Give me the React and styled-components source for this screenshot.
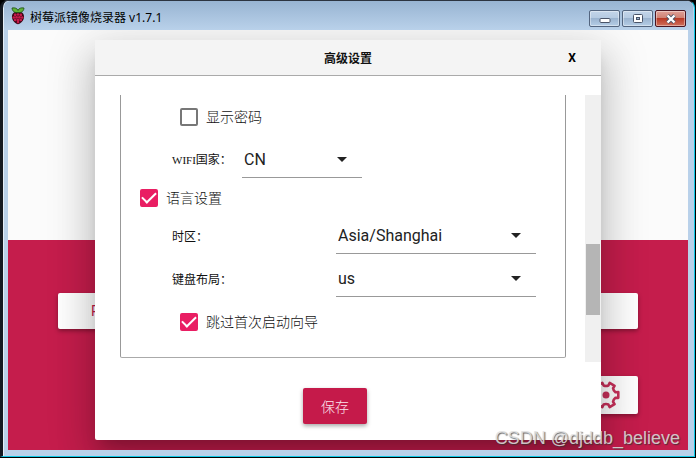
import React, { useState } from 'react';
import styled, { createGlobalStyle } from 'styled-components';

const GlobalStyle = createGlobalStyle`
  * {
    box-sizing: border-box;
  }

  body {
    margin: 0;
    background: #000;
    font-family: 'Liberation Sans', 'Noto Sans CJK SC', sans-serif;
  }

  button, select, input {
    margin: 0;
    font-family: inherit;
  }
`;

const Window = styled.div`
  display: flex;
  flex-direction: column;
  min-height: calc(100vh - 1px);
  margin: 0 1px 1px 0;
  padding: 0 6px 6px 5px;
  border: 1px solid #10c8e6;
  border-top-color: #2c3440;
  border-left: 3px solid #151a22;
  border-radius: 8px 8px 0 0;
  background: #b9d1ea;
  box-shadow: inset 1px 1px 0 #e4eef8;
`;

const TitleBar = styled.header`
  display: flex;
  align-items: center;
  height: 29px;
  margin: 0 -5px 0 -4px;
  padding: 0 7px 0 6px;
  border-radius: 6px 6px 0 0;
  background: linear-gradient(#98b4d2, #b9d1ea);
`;

const WindowTitle = styled.h1`
  flex: 1;
  margin: 4px 0 0 4px;
  font: 12px/20px 'Noto Sans', 'Noto Sans CJK SC', sans-serif;
  color: #000;
`;

const WindowButtons = styled.div`
  display: flex;
  gap: 2px;
  align-self: flex-start;
  margin-top: 9px;
`;

const WindowButton = styled.button`
  display: flex;
  align-items: center;
  justify-content: center;
  width: 31px;
  height: 17px;
  padding: 0;
  border: 1px solid ${({ $danger }) => ($danger ? '#4a1420' : '#53657f')};
  border-radius: 2px;
  background: ${({ $danger }) =>
    $danger
      ? 'linear-gradient(#e0a097 0%, #d08274 45%, #b93a26 50%, #d0705c 100%)'
      : 'linear-gradient(#c3d5e9 0%, #b6cbe2 45%, #9bb4d0 50%, #b5cde6 100%)'};
  box-shadow: inset 0 0 0 1px rgba(255, 255, 255, 0.4);
`;

const Client = styled.main`
  position: relative;
  flex: 1;
  display: grid;
  grid-template-rows: 1fr 1fr;
  overflow: hidden;
`;

const LogoArea = styled.div`
  background: #fbfbfb;
`;

const ActionArea = styled.div`
  display: flex;
  flex-direction: column;
  align-items: flex-end;
  gap: 47px;
  padding: 53px 50px 36px;
  background: #c51d4c;
`;

const ActionRow = styled.div`
  display: flex;
  gap: 20px;
  width: 100%;
`;

const ActionButton = styled.button`
  flex: 1;
  height: 36px;
  padding: 0 33px;
  border: 0;
  border-radius: 2px;
  background: #fff;
  color: #c51a4a;
  font: 14px Roboto, sans-serif;
  text-align: left;
  box-shadow: 0 2px 4px rgba(0, 0, 0, 0.35);
`;

const GearButton = styled.button`
  display: flex;
  align-items: center;
  justify-content: center;
  width: 64px;
  height: 38px;
  padding: 0;
  border: 0;
  border-radius: 2px;
  background: #fff;
  box-shadow: 0 2px 4px rgba(0, 0, 0, 0.35);
`;

const Dialog = styled.section`
  position: absolute;
  inset: 10px 87px;
  display: flex;
  flex-direction: column;
  border-radius: 2px;
  background: #fff;
  box-shadow:
    0 11px 15px -7px rgba(0, 0, 0, 0.2),
    0 24px 38px 3px rgba(0, 0, 0, 0.14),
    0 9px 46px 8px rgba(0, 0, 0, 0.12);
`;

const DialogHeader = styled.div`
  display: grid;
  grid-template-columns: 1fr auto 1fr;
  align-items: center;
  height: 36px;
  border-bottom: 1px solid #aaa;
  background: #f4f4f4;
`;

const DialogTitle = styled.h2`
  grid-column: 2;
  margin: 0;
  font: bold 12px/16px 'Noto Sans CJK SC', sans-serif;
  color: #111;
`;

const CloseButton = styled.button`
  justify-self: end;
  width: 16px;
  margin-right: 21px;
  padding: 0;
  border: 0;
  background: none;
  font: bold 12px/16px Roboto, sans-serif;
  color: #000;
`;

const ScrollArea = styled.div`
  flex: 1;
  display: flex;
  justify-content: space-between;
  margin-top: 19px;
  padding-left: 25px;
  overflow: hidden;
`;

const Panel = styled.div`
  flex: 1;
  align-self: flex-start;
  margin-right: 19px;
  padding: 0 29px 14px 19px;
  border: 1px solid #999;
  border-top: 0;
  border-bottom-color: #aaa;
  border-radius: 0 0 2px 2px;
`;

const ScrollTrack = styled.div`
  width: 16px;
  padding: 149px 1px 0;
  background: #f0f0f0;
`;

const ScrollThumb = styled.div`
  height: 71px;
  background: #b5b5b5;
`;

const CheckRow = styled.label`
  display: flex;
  align-items: center;
  gap: 8px;
  height: ${({ $nested }) => ($nested ? '43px' : '33px')};
  padding-left: ${({ $nested }) => ($nested ? '40px' : '0')};
  font: 300 14px/20px 'Noto Sans CJK SC', sans-serif;
  color: #111;
`;

const CheckText = styled.span`
  padding-bottom: 2px;
`;

const Check = styled.input`
  appearance: none;
  display: grid;
  place-items: center;
  width: 18px;
  height: 18px;
  border: 2px solid #777;
  border-radius: 2px;
  background: #fff;

  &:checked {
    border-color: #e91e63;
    background: #e91e63;
  }

  &:checked::after {
    content: '';
    width: 12px;
    height: 6px;
    border: solid #fff;
    border-width: 0 0 2px 2px;
    transform: translateY(-2px) rotate(-45deg);
  }
`;

const FieldRow = styled.div`
  display: flex;
  align-items: center;
  height: 43px;
  padding-left: 32px;
`;

const FieldLabel = styled.label`
  width: ${({ $wide }) => ($wide ? '164px' : '70px')};
  font: 12px/18px 'Noto Sans CJK SC', sans-serif;
  color: #111;
`;

const Latin = styled.span`
  font: 11px/18px 'Liberation Serif', serif;
`;

const SelectBox = styled.div`
  display: grid;
  align-items: center;
  ${({ $wide }) => ($wide ? 'flex: 1;' : 'width: 120px;')}

  > * {
    grid-area: 1 / 1;
  }
`;

const Select = styled.select`
  appearance: none;
  width: 100%;
  height: 37px;
  padding: 2px 40px 0 2px;
  border: 0;
  border-bottom: 1px solid #999;
  border-radius: 0;
  background: transparent;
  font: 16px/24px Roboto, sans-serif;
  color: #222;
`;

const Arrow = styled.svg`
  justify-self: end;
  margin-right: 15px;
  pointer-events: none;
`;

const DialogFooter = styled.div`
  display: flex;
  justify-content: center;
  padding: 26px 0 16px;
  margin-right: 26px;
`;

const SaveButton = styled.button`
  width: 64px;
  height: 36px;
  padding: 0;
  border: 0;
  border-radius: 2px;
  background: #c51a4a;
  color: #fbe4ec;
  font: 300 14px/20px 'Noto Sans CJK SC', sans-serif;
  box-shadow: 0 2px 4px rgba(0, 0, 0, 0.35);
`;

const Watermark = styled.div`
  position: absolute;
  right: 8px;
  bottom: 2px;
  font: 18px/20px 'Liberation Sans', sans-serif;
  color: rgba(225, 225, 225, 0.85);
  text-shadow: 1px 1px 1px rgba(50, 50, 50, 0.75);
`;

const drupelets = [
  [5.2, 7.4], [8, 7], [10.8, 7.4],
  [3.8, 10], [6.6, 9.8], [9.4, 9.8], [12.2, 10],
  [5.2, 12.4], [8, 12.4], [10.8, 12.4], [8, 14.6],
];

const RaspberryIcon = () => (
  <svg width="16" height="18" viewBox="0 0 16 18" aria-hidden="true">
    <path d="M8 5C4 4 1.600 7 2 10.500 2.400 14 5.500 16.500 8 17.300 10.500 16.500 13.600 14 14 10.500 14.400 7 12 4 8 5Z" fill="#3b0716" />
    {drupelets.map(([x, y]) => (
      <circle key={`${x}-${y}`} cx={x} cy={y + 0.5} r="1.350" fill="#c51a4a" />
    ))}
    <path d="M8 5.500C5 6 2.200 4.500 2 1 5 .5 7.200 1.200 8 3.500 8.800 1.200 11 .5 14 1 13.800 4.500 11 6 8 5.500Z" fill="#5fb336" stroke="#1d4a16" strokeWidth=".8" />
  </svg>
);

// Outline of a six-toothed cog around the origin
const cogPoint = (deg, r) => {
  const a = (deg * Math.PI) / 180;
  return `${(r * Math.cos(a)).toFixed(2)} ${(r * Math.sin(a)).toFixed(2)}`;
};

const cogPath = `M${[0, 60, 120, 180, 240, 300]
  .map((a) => `${cogPoint(a - 13, 12.6)}L${cogPoint(a + 13, 12.6)}L${cogPoint(a + 16, 9.8)}Q${cogPoint(a + 30, 8.6)} ${cogPoint(a + 44, 9.8)}`)
  .join('L')}Z`;

const GearIcon = () => (
  <svg width="30" height="30" viewBox="-15 -15 30 30" aria-hidden="true">
    <path d={cogPath} fill="none" stroke="#c8305a" strokeWidth="2.600" strokeLinejoin="round" />
    <circle r="3.500" fill="#c8305a" />
  </svg>
);

const CheckField = ({ nested, initial, children }) => {
  const [checked, setChecked] = useState(initial);
  return (
    <CheckRow $nested={nested}>
      <Check type="checkbox" checked={checked} onChange={(e) => setChecked(e.target.checked)} />
      <CheckText>{children}</CheckText>
    </CheckRow>
  );
};

const SelectField = ({ id, label, value, wide }) => (
  <FieldRow>
    <FieldLabel htmlFor={id} $wide={wide}>{label}</FieldLabel>
    <SelectBox $wide={wide}>
      <Select id={id} defaultValue={value}>
        <option value={value}>{value}</option>
      </Select>
      <Arrow width="10" height="5" viewBox="0 0 10 5" aria-hidden="true">
        <path d="M0 0H10L5 5Z" fill="#222" />
      </Arrow>
    </SelectBox>
  </FieldRow>
);

const App = () => {
  return (
    <>
      <GlobalStyle />
      <Window>
        <TitleBar>
          <RaspberryIcon />
          <WindowTitle>树莓派镜像烧录器 v1.7.1</WindowTitle>
          <WindowButtons>
            <WindowButton aria-label="Minimize">
              <svg width="12" height="10" viewBox="0 0 12 10">
                <rect x="1" y="4.500" width="10" height="4" rx="1" fill="#fff" stroke="#4a5468" />
              </svg>
            </WindowButton>
            <WindowButton aria-label="Maximize">
              <svg width="12" height="10" viewBox="0 0 12 10">
                <rect x="1.500" y=".5" width="9" height="8" rx="1" fill="#fff" stroke="#4a5468" />
                <rect x="4.500" y="3.500" width="3" height="2" fill="#9bb4d0" stroke="#4a5468" />
              </svg>
            </WindowButton>
            <WindowButton $danger aria-label="Close">
              <svg width="12" height="10" viewBox="0 0 12 10">
                <path d="M2.500 1.500L9.500 8.500M9.500 1.500L2.500 8.500" stroke="#4a5468" strokeWidth="4" />
                <path d="M2.500 1.500L9.500 8.500M9.500 1.500L2.500 8.500" stroke="#fff" strokeWidth="2.400" />
              </svg>
            </WindowButton>
          </WindowButtons>
        </TitleBar>

        <Client>
          <LogoArea />
          <ActionArea>
            <ActionRow>
              <ActionButton>R</ActionButton>
              <ActionButton aria-label="Storage" />
              <ActionButton aria-label="Write" />
            </ActionRow>
            <GearButton aria-label="Settings">
              <GearIcon />
            </GearButton>
          </ActionArea>

          {/* Advanced options */}
          <Dialog role="dialog" aria-labelledby="dialog-title">
            <DialogHeader>
              <DialogTitle id="dialog-title">高级设置</DialogTitle>
              <CloseButton>X</CloseButton>
            </DialogHeader>
            <ScrollArea>
              <Panel>
                <CheckField nested initial={false}>显示密码</CheckField>
                <SelectField id="country" label={<><Latin>WIFI</Latin>国家：</>} value="CN" />
                <CheckField initial>语言设置</CheckField>
                <SelectField id="timezone" label="时区：" value="Asia/Shanghai" wide />
                <SelectField id="keyboard" label="键盘布局：" value="us" wide />
                <CheckField nested initial>跳过首次启动向导</CheckField>
              </Panel>
              <ScrollTrack>
                <ScrollThumb />
              </ScrollTrack>
            </ScrollArea>
            <DialogFooter>
              <SaveButton>保存</SaveButton>
            </DialogFooter>
          </Dialog>

          <Watermark>CSDN @djddb_believe</Watermark>
        </Client>
      </Window>
    </>
  );
};

export default App;
